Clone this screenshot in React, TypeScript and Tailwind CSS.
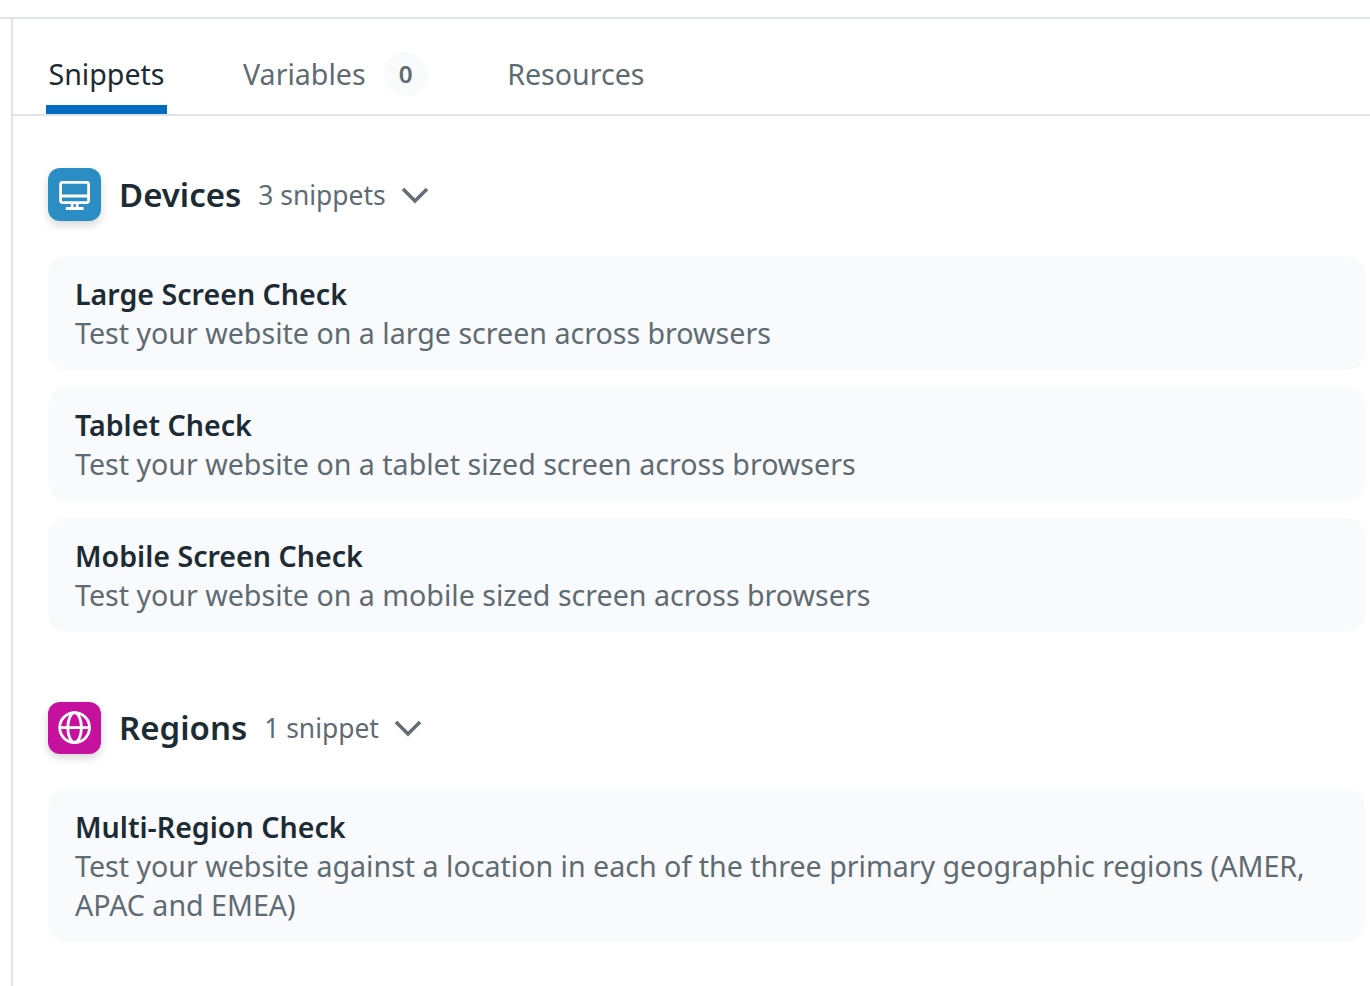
import React from "react";

type Snippet = { title: string; text: string };

function Card({ title, text }: Snippet) {
  return (
    <div className="rounded-[18px] bg-[#f9fafc] px-[27px] pt-[18px] pb-[17.5px] text-[28.6px] leading-[39px]">
      <h3 className="font-semibold text-[#1c2b34]">{title}</h3>
      <p className="text-[#5f6b73]">{text}</p>
    </div>
  );
}

function Chevron() {
  return (
    <svg width="28" height="18" viewBox="0 0 28 18" fill="none" stroke="#626d75" strokeWidth="3.5">
      <path d="M2 3 14 15 26 3" />
    </svg>
  );
}

function DevicesIcon() {
  return (
    <svg width="53" height="53" viewBox="0 0 53 53" fill="none" stroke="white" strokeWidth="2.8">
      <rect x="12.600" y="14.400" width="28" height="20.200" rx="2" />
      <path d="M12.600 28h28M24.200 34.500v6M29.200 34.500v6M17.800 40.500h17.800" />
    </svg>
  );
}

function RegionsIcon() {
  return (
    <svg width="53" height="52" viewBox="0 0 53 52" fill="none" stroke="white" strokeWidth="2.8">
      <circle cx="26.600" cy="25.600" r="14.900" />
      <ellipse cx="26.600" cy="25.600" rx="6.800" ry="14.900" />
      <path d="M11.600 25.600h30" />
    </svg>
  );
}

export default function App() {
  return (
    <div className="flex h-[986px] w-[1370px] flex-col overflow-hidden bg-white font-['Noto_Sans',sans-serif]">
      <div className="h-[19px] shrink-0 border-b-2 border-[#e1e4ea]" />
      <main className="ml-[11px] flex-1 border-l-2 border-[#e0e3e9]">
        <nav className="flex h-[97px] border-b-2 border-[#e1e3eb] pl-[33px] text-[28.6px] text-[#5f6b73]">
          <div className="flex h-[95px] w-[121px] items-center justify-center border-b-[9px] border-[#006bc2] pt-[25px] text-[#1c2b34]">Snippets</div>
          <div className="ml-[76px] flex h-[86px] items-center pt-[25px]">
            Variables
            <span className="-mt-px ml-[18px] flex size-[44px] items-center justify-center rounded-full bg-[#f9fafc] text-[24.2px] font-semibold">0</span>
          </div>
          <div className="ml-[79.5px] flex h-[86px] items-center pt-[25px]">Resources</div>
        </nav>
        <section className="pt-[52px] pr-[5px] pl-[35px]">
          <header className="flex h-[53px] items-center">
            <span className="rounded-[12px] bg-[#2a8dc4] shadow-[0_4px_9px_rgba(0,0,0,0.16)]"><DevicesIcon /></span>
            <h2 className="ml-[18px] text-[33px] font-semibold text-[#1c2b34]">Devices</h2>
            <span className="mr-[15px] ml-[17px] pt-[2px] text-[26.4px] text-[#5f6b73]">3 snippets</span>
            <Chevron />
          </header>
          <div className="mt-[35px] flex flex-col gap-[17.5px]">
            <Card title="Large Screen Check" text="Test your website on a large screen across browsers" />
            <Card title="Tablet Check" text="Test your website on a tablet sized screen across browsers" />
            <Card title="Mobile Screen Check" text="Test your website on a mobile sized screen across browsers" />
          </div>
        </section>
        <section className="pt-[70.5px] pr-[5px] pl-[35px]">
          <header className="flex h-[52px] items-center">
            <span className="rounded-[12px] bg-[#c6119f] shadow-[0_4px_9px_rgba(0,0,0,0.16)]"><RegionsIcon /></span>
            <h2 className="ml-[18px] text-[33px] font-semibold text-[#1c2b34]">Regions</h2>
            <span className="mr-[15px] ml-[17px] pt-[2px] text-[26.4px] text-[#5f6b73]">1 snippet</span>
            <Chevron />
          </header>
          <div className="mt-[35px]">
            <Card title="Multi-Region Check" text="Test your website against a location in each of the three primary geographic regions (AMER, APAC and EMEA)" />
          </div>
        </section>
      </main>
    </div>
  );
}
